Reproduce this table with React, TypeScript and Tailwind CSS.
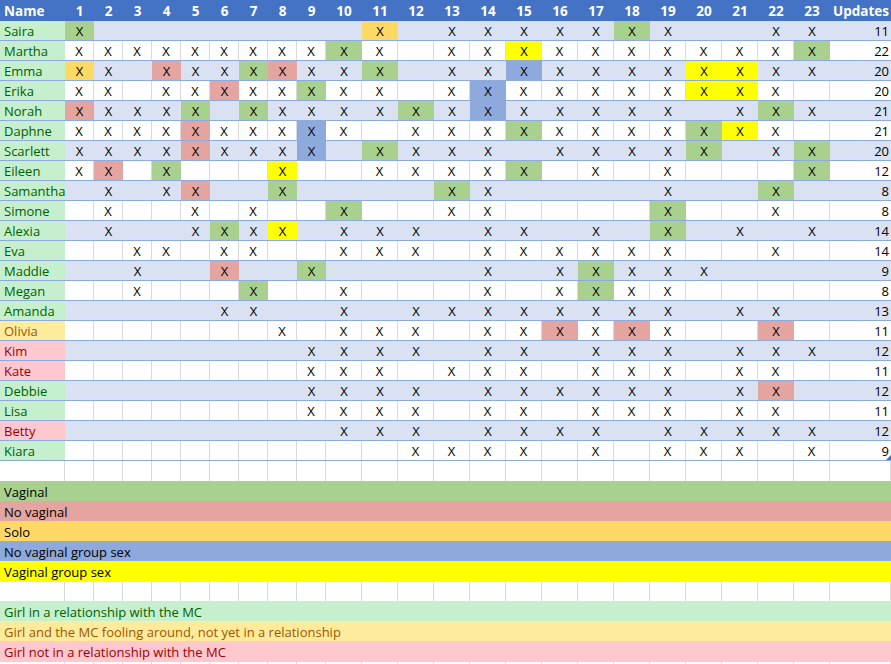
type Status = 'r' | 'f' | 'n'

// cell codes: . empty, x plain X, g vaginal, r no vaginal, o solo, b no vaginal group, y vaginal group
const rows: [string, Status, string, number][] = [
  ['Saira', 'r', 'g.........o.xxxxxgx..xx', 11],
  ['Martha', 'r', 'xxxxxxxxxgx.xxyxxxxxxxg', 22],
  ['Emma', 'r', 'ox.rxxgrxxg.xxbxxxxyyxx', 20],
  ['Erika', 'r', 'xx.xxrxxgxx.xbxxxxxyyx.', 20],
  ['Norah', 'r', 'rxxxg.gxxxxgxbxxxxx.xgx', 21],
  ['Daphne', 'r', 'xxxxrxxxbx.xxxgxxxxgyx.', 21],
  ['Scarlett', 'r', 'xxxxrxxxb.gxxx.xxxxg.xg', 20],
  ['Eileen', 'r', 'xr.g...y..xxxxg.x.x...g', 12],
  ['Samantha', 'r', '.x.xr..g....gx....x..g.', 8],
  ['Simone', 'r', '.x..x.x..g..xx....g..x.', 8],
  ['Alexia', 'r', '.x..xgxy.xxx.xx.x.g.x.x', 14],
  ['Eva', 'r', '..xx.xx..xxx.xxxxxx..x.', 14],
  ['Maddie', 'r', '..x..r..g....x.xgxxx...', 9],
  ['Megan', 'r', '..x...g..x...x.xgxx....', 8],
  ['Amanda', 'r', '.....xx..x.xxxxxxxx.xx.', 13],
  ['Olivia', 'f', '.......x.xxx.xxrxrx..r.', 11],
  ['Kim', 'n', '........xxxx.xx.xxx.xxx', 12],
  ['Kate', 'n', '........xxx.xxx.xxx.xx.', 11],
  ['Debbie', 'r', '........xxxx.xxxxxx.xr.', 12],
  ['Lisa', 'r', '........xxxx.xx.xxx.xx.', 11],
  ['Betty', 'n', '.........xxx.xxxx.xxxxx', 12],
  ['Kiara', 'r', '...........xxxx.x.xxx.x', 9],
]

const fills: Record<string, string> = {
  g: 'bg-[#a9d08e]',
  r: 'bg-[#e4a49f]',
  o: 'bg-[#ffd966]',
  b: 'bg-[#8ea9db]',
  y: 'bg-[#ffff00]',
}

const nameStyle: Record<Status, string> = {
  r: 'bg-[#c6efce] text-[#006100]',
  f: 'bg-[#ffeb9c] text-[#9c5700]',
  n: 'bg-[#ffc7ce] text-[#9c0006]',
}

const cols = 'grid grid-cols-[65px_repeat(9,29px)_repeat(14,36px)_61px]'
const updates = Array.from({ length: 23 }, (_, i) => i + 1)

function BlankRow({ h = 'h-[20px]' }: { h?: string }) {
  return (
    <div className={`${cols} ${h} bg-white`}>
      {Array.from({ length: 25 }).map((_, i) => (
        <div key={i} className="border-r border-[#d9d9d9]" />
      ))}
    </div>
  )
}

function LegendRow({ label, cls, h = 'h-[20px]' }: { label: string; cls: string; h?: string }) {
  return <div className={`flex ${h} items-center pl-[4px] pt-[2px] ${cls}`}>{label}</div>
}

export default function App() {
  return (
    <div className="w-[891px] h-[664px] overflow-hidden bg-white font-['Open_Sans',sans-serif] text-[13px] leading-none text-black">
      {/* header */}
      <div className={`${cols} h-[21px] bg-[#4472c4] text-white font-bold text-[13.5px]`}>
        <div className="flex items-center pl-[4px] pt-[2px]">Name</div>
        {updates.map((u) => (
          <div key={u} className="flex items-center justify-center pt-[2px]">{u}</div>
        ))}
        <div className="flex items-center justify-end pr-[2px] pt-[2px]">Updates</div>
      </div>

      {/* girls */}
      {rows.map(([name, status, cells, count], ri) => {
        const banded = ri % 2 === 0
        return (
          <div
            key={name}
            className={`${cols} h-[20px] border-b border-[#8ea9db] ${banded ? 'bg-[#d9e1f2]' : 'bg-white'}`}
          >
            <div className={`flex items-center pl-[4px] pt-[2px] ${nameStyle[status]}`}>{name}</div>
            {cells.split('').map((c, ci) => {
              const fill = fills[c]
              const cls = fill ? fill : banded ? '' : 'border-r border-[#d9d9d9]'
              return (
                <div key={ci} className={`flex items-center justify-center pt-[2px] ${cls}`}>
                  {c === '.' ? '' : 'X'}
                </div>
              )
            })}
            <div className="relative flex items-center justify-end pr-[2px] pt-[2px]">
              {count}
              {ri === rows.length - 1 && (
                <span className="absolute right-0 bottom-0 w-0 h-0 border-l-[5px] border-l-transparent border-b-[5px] border-b-[#4472c4]" />
              )}
            </div>
          </div>
        )
      })}

      <BlankRow />

      {/* activity legend */}
      <LegendRow label="Vaginal" cls="bg-[#a9d08e]" />
      <LegendRow label="No vaginal" cls="bg-[#e4a49f]" />
      <LegendRow label="Solo" cls="bg-[#ffd966]" />
      <LegendRow label="No vaginal group sex" cls="bg-[#8ea9db]" />
      <LegendRow label="Vaginal group sex" cls="bg-[#ffff00]" h="h-[21px]" />

      <BlankRow h="h-[19px]" />

      {/* relationship legend */}
      <LegendRow label="Girl in a relationship with the MC" cls="bg-[#c6efce] text-[#006100]" />
      <LegendRow label="Girl and the MC fooling around, not yet in a relationship" cls="bg-[#ffeb9c] text-[#9c5700]" />
      <LegendRow label="Girl not in a relationship with the MC" cls="bg-[#ffc7ce] text-[#9c0006]" h="h-[21px]" />

      <BlankRow />
    </div>
  )
}
